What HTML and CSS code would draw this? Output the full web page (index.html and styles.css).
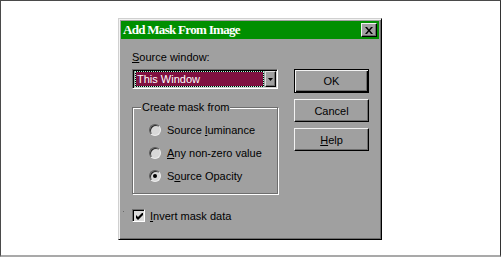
FILE: index.html
```html
<!DOCTYPE html>
<html lang="en">
<head>
    <meta charset="UTF-8">
    <title>Add Mask From Image</title>
    <link rel="stylesheet" href="styles.css">
</head>
<body>
    <div class="frame">
        <div class="dialog">
            <div class="titlebar">
                <span class="title">Add Mask From Image</span>
                <button class="close">
                    <svg width="8" height="7" viewBox="0 0 8 7">
                        <path d="M0 0h2l2 2.5L6 0h2L5 3.5 8 7H6L4 4.5 2 7H0l3-3.5z" fill="#000"/>
                    </svg>
                </button>
            </div>

            <div class="body">
                <div class="main">
                    <div class="left">
                        <div class="caption"><u>S</u>ource window:</div>
                        <div class="combo">
                            <div class="combo-value">This Window</div>
                            <div class="combo-arrow">
                                <svg width="5" height="3" viewBox="0 0 5 3"><path d="M0 0h5L2.5 3z" fill="#000"/></svg>
                            </div>
                        </div>

                        <fieldset class="group">
                            <legend>Create mask from</legend>
                            <div class="radio-row">
                                <span class="radio"></span>
                                <span>Source <u>l</u>uminance</span>
                            </div>
                            <div class="radio-row">
                                <span class="radio"></span>
                                <span><u>A</u>ny non-zero value</span>
                            </div>
                            <div class="radio-row">
                                <span class="radio checked"></span>
                                <span>S<u>o</u>urce Opacity</span>
                            </div>
                        </fieldset>
                    </div>

                    <div class="buttons">
                        <button class="btn default">OK</button>
                        <button class="btn">Cancel</button>
                        <button class="btn"><u>H</u>elp</button>
                    </div>
                </div>

                <div class="check-row">
                    <span class="speck"></span>
                    <span class="checkbox">
                        <svg width="7" height="7" viewBox="0 0 7 7">
                            <path d="M0 2v3l2 2 5-5V-1L2 4z" fill="#000"/>
                        </svg>
                    </span>
                    <span><u>I</u>nvert mask data</span>
                </div>
            </div>
        </div>
    </div>
</body>
</html>
```

FILE: styles.css
```css
:root {
    --face: #a0a0a0;
    --light: #f2f2f2;
    --shadow: #6e6e6e;
    --title: #008f00;
    --select: #7f1040;
}

body {
    margin: 0;
    background: #ffffff;
    font-family: "Liberation Sans", Arial, sans-serif;
    font-size: 11px;
    color: #000000;
}

u {
    text-decoration-thickness: 1px;
    text-underline-offset: 1px;
}

.frame {
    width: 501px;
    height: 257px;
    box-sizing: border-box;
    border-top: 1px solid #4a4a4a;
    border-left: 1px solid #4a4a4a;
    border-right: 1px solid #333333;
    border-bottom: 2px solid #a9a9a9;
    padding: 17px 0 0 117px;
}

.dialog {
    width: 264px;
    height: 222px;
    box-sizing: border-box;
    background: var(--face);
    border: 1px solid;
    border-color: #d0d0d0 #000000 #000000 #d0d0d0;
    box-shadow: inset 1px 1px var(--light), inset -1px -1px var(--shadow);
    padding: 2px;
}

.titlebar {
    height: 18px;
    background: var(--title);
    display: flex;
    align-items: center;
    justify-content: space-between;
    padding: 0 2px;
    color: #ffffff;
}

.title {
    font: bold 13px "Liberation Serif", "Times New Roman", serif;
    letter-spacing: -0.7px;
}

.close {
    width: 16px;
    height: 14px;
    box-sizing: border-box;
    padding: 0;
    background: var(--face);
    border: 1px solid;
    border-color: var(--light) #000000 #000000 var(--light);
    box-shadow: inset -1px -1px var(--shadow);
    display: flex;
    align-items: center;
    justify-content: center;
}

.body {
    padding: 12px 10px 0 11px;
}

.main {
    display: flex;
    gap: 16px;
}

.left {
    width: 146px;
}

.caption {
    line-height: 13px;
}

.combo {
    margin-top: 5px;
    height: 20px;
    box-sizing: border-box;
    border: 1px solid;
    border-color: var(--shadow) #ffffff #ffffff var(--shadow);
    box-shadow: inset 1px 1px #000000, inset -1px -1px #d0d0d0;
    padding: 1px;
    display: flex;
}

.combo-value {
    flex: 1;
    margin-left: 1px;
    margin-right: 1px;
    box-sizing: border-box;
    background: #000000;
    border: 1px dotted #a8ffd8;
    box-shadow: inset 0 0 0 200px var(--select);
    color: #ffffff;
    padding-left: 1px;
    line-height: 14px;
}

.combo-arrow {
    width: 11px;
    box-sizing: border-box;
    background: var(--face);
    border: 1px solid;
    border-color: #e0e0e0 #000000 #000000 #e0e0e0;
    box-shadow: inset -1px -1px var(--shadow);
    display: flex;
    align-items: center;
    justify-content: center;
}

.group {
    margin: 12px 0 0;
    padding: 4px 0 6px 16px;
    min-inline-size: 0;
    border: 1px solid var(--shadow);
    box-shadow: inset 1px 1px #ffffff, 1px 1px #ffffff;
}

.group legend {
    margin-left: -8px;
    padding: 0 1px;
    background: var(--face);
    line-height: 13px;
}

.radio-row {
    height: 23px;
    display: flex;
    align-items: center;
    gap: 6px;
}

.radio {
    width: 12px;
    height: 12px;
    box-sizing: border-box;
    border-radius: 50%;
    background: #d8d8d8;
    border: 1px solid;
    border-color: #5a5a5a #ececec #ececec #5a5a5a;
    box-shadow: inset 1px 1px #2a2a2a;
    display: flex;
    align-items: center;
    justify-content: center;
}

.radio.checked::after {
    content: "";
    width: 4px;
    height: 4px;
    border-radius: 50%;
    background: #000000;
}

.buttons {
    padding-top: 18px;
    display: flex;
    flex-direction: column;
    gap: 6px;
}

.btn {
    width: 75px;
    height: 23px;
    box-sizing: border-box;
    padding: 0;
    background: var(--face);
    border: 1px solid;
    border-color: var(--light) #000000 #000000 var(--light);
    box-shadow: inset -1px -1px var(--shadow);
    font: 11px "Liberation Sans", Arial, sans-serif;
    color: #000000;
}

.btn.default {
    height: 24px;
    border-color: #000000;
    box-shadow: inset 1px 1px var(--light), inset -1px -1px #000000, inset -2px -2px var(--shadow);
}

.check-row {
    margin-top: 15px;
    margin-left: -9px;
    display: flex;
    align-items: center;
    gap: 5px;
}

.speck {
    width: 1px;
    height: 1px;
    background: #6a6a6a;
    margin-right: 3px;
    align-self: flex-start;
    margin-top: 2px;
}

.checkbox {
    width: 13px;
    height: 13px;
    box-sizing: border-box;
    background: #dcdcdc;
    border: 1px solid;
    border-color: var(--shadow) #ffffff #ffffff var(--shadow);
    box-shadow: inset 1px 1px #000000;
    display: flex;
    align-items: center;
    justify-content: center;
    padding: 1px 0 0 1px;
}
```
